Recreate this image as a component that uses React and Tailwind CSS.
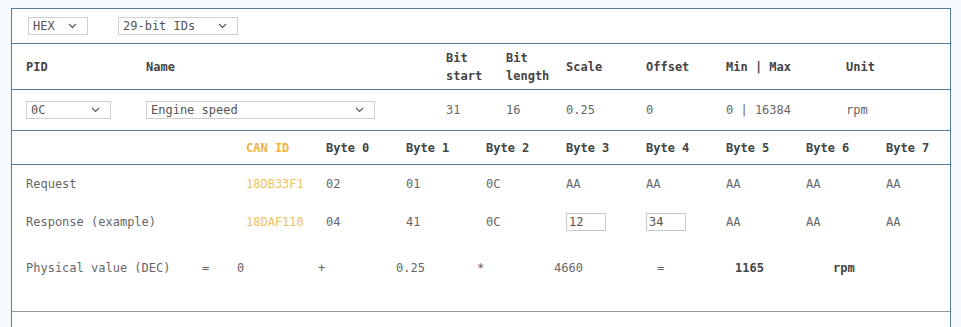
import React from 'react';

const Chevron = () => (
  <svg width="9" height="6" viewBox="0 0 9 6" className="shrink-0">
    <path d="M1 1 L4.5 4.5 L8 1" fill="none" stroke="#555" strokeWidth="1.1" />
  </svg>
);

const Select = ({ value, width }) => (
  <div className={`flex h-[18px] items-center justify-between border border-[#cfcfcf] bg-white pl-[4px] pr-[10px] text-[12px] text-[#555] ${width}`}>
    <span>{value}</span>
    <Chevron />
  </div>
);

const byteCols = ['Byte 0', 'Byte 1', 'Byte 2', 'Byte 3', 'Byte 4', 'Byte 5', 'Byte 6', 'Byte 7'];
const request = ['02', '01', '0C', 'AA', 'AA', 'AA', 'AA', 'AA'];
const response = ['04', '41', '0C', '12', '34', 'AA', 'AA', 'AA'];

const ByteInput = ({ value }) => (
  <div className="flex h-[18px] w-[40px] items-center border border-[#c8c8c8] bg-white pl-[2px] text-[#555]">
    {value}
  </div>
);

export default function App() {
  return (
    <div className="min-h-[327px] overflow-hidden bg-[#f5fbfd] pl-[11px] pt-[8px] font-['DejaVu_Sans_Mono','Liberation_Mono',monospace]">
      <div className="h-[330px] w-[940px] overflow-hidden border border-[#557f98] bg-white text-[12px]">
        {/* format selectors */}
        <div className="flex h-[35px] items-center gap-[30px] border-b border-[#557f98] pl-[16px]">
          <Select value="HEX" width="w-[60px]" />
          <Select value="29-bit IDs" width="w-[120px]" />
        </div>

        {/* signal header */}
        <div className="flex h-[46px] items-center border-b border-[#557f98] pl-[14px] font-bold leading-[18px] text-[#444]">
          <div className="w-[120px] shrink-0">PID</div>
          <div className="w-[300px] shrink-0">Name</div>
          <div className="w-[60px] shrink-0">Bit<br />start</div>
          <div className="w-[60px] shrink-0">Bit<br />length</div>
          <div className="w-[80px] shrink-0">Scale</div>
          <div className="w-[80px] shrink-0">Offset</div>
          <div className="w-[120px] shrink-0">Min | Max</div>
          <div className="shrink-0">Unit</div>
        </div>

        {/* signal row */}
        <div className="flex h-[41px] items-center border-b border-[#557f98] pl-[14px] text-[#666]">
          <div className="w-[120px] shrink-0"><Select value="0C" width="w-[85px]" /></div>
          <div className="w-[300px] shrink-0"><Select value="Engine speed" width="w-[229px]" /></div>
          <div className="w-[60px] shrink-0">31</div>
          <div className="w-[60px] shrink-0">16</div>
          <div className="w-[80px] shrink-0">0.25</div>
          <div className="w-[80px] shrink-0">0</div>
          <div className="w-[120px] shrink-0">0 | 16384</div>
          <div className="shrink-0">rpm</div>
        </div>

        {/* frame header */}
        <div className="flex h-[34px] items-center border-b border-[#557f98] pl-[14px] font-bold text-[#444]">
          <div className="w-[220px] shrink-0" />
          <div className="w-[80px] shrink-0 text-[#f2b53a]">CAN ID</div>
          {byteCols.map((b) => (
            <div key={b} className="w-[80px] shrink-0">{b}</div>
          ))}
        </div>

        {/* frames */}
        <div className="h-[147px] border-b border-[#9a9a9a] pl-[14px] text-[#666]">
          <div className="flex h-[38px] items-center">
            <div className="w-[220px] shrink-0">Request</div>
            <div className="w-[80px] shrink-0 text-[#f2c25a]">18DB33F1</div>
            {request.map((v, i) => (
              <div key={i} className="w-[80px] shrink-0">{v}</div>
            ))}
          </div>
          <div className="flex h-[38px] items-center">
            <div className="w-[220px] shrink-0">Response (example)</div>
            <div className="w-[80px] shrink-0 text-[#f2c25a]">18DAF110</div>
            {response.map((v, i) => (
              <div key={i} className="w-[80px] shrink-0">
                {i === 3 || i === 4 ? <ByteInput value={v} /> : v}
              </div>
            ))}
          </div>
          <div className="mt-[8px] flex h-[38px] items-center">
            <div className="w-[176px] shrink-0">Physical value (DEC)</div>
            <div className="w-[35px] shrink-0">=</div>
            <div className="w-[81px] shrink-0">0</div>
            <div className="w-[78px] shrink-0">+</div>
            <div className="w-[81px] shrink-0">0.25</div>
            <div className="w-[77px] shrink-0">*</div>
            <div className="w-[103px] shrink-0">4660</div>
            <div className="w-[78px] shrink-0">=</div>
            <div className="w-[98px] shrink-0 font-bold text-[#444]">1165</div>
            <div className="shrink-0 font-bold text-[#444]">rpm</div>
          </div>
        </div>
      </div>
    </div>
  );
}
